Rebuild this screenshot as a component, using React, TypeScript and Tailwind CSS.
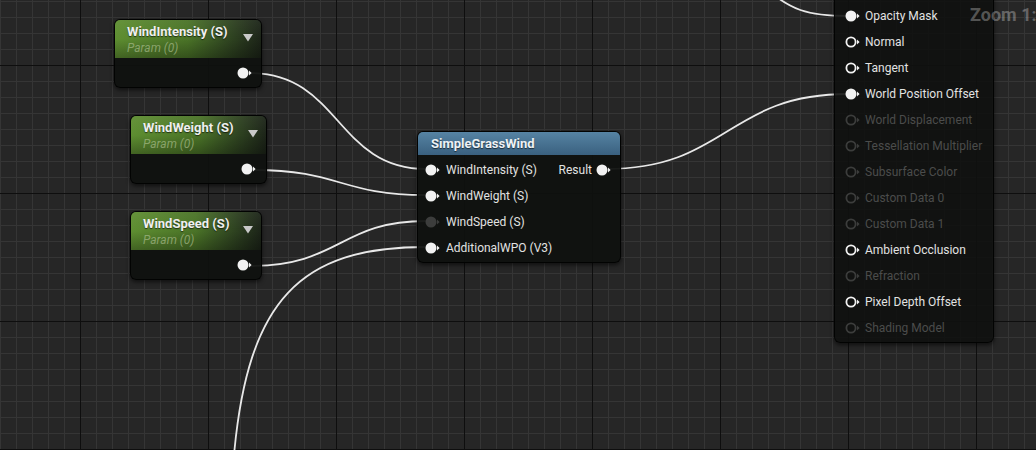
import React from "react";

type PinKind = "filled" | "hollow" | "dim" | "darkfill";

function Pin({ kind }: { kind: PinKind }) {
  const light = "#f2f2f2";
  const dim = "#3c3d3c";
  const col = kind === "dim" || kind === "darkfill" ? dim : light;
  return (
    <svg width="16" height="12" viewBox="0 0 16 12" className="shrink-0">
      {kind === "filled" || kind === "darkfill" ? (
        <circle cx="6" cy="6" r="5.5" fill={col} />
      ) : (
        <circle cx="6" cy="6" r="4.6" fill="none" stroke={col} strokeWidth="1.8" />
      )}
      <polygon points="12,3.5 14.6,6 12,8.5" fill={col} />
    </svg>
  );
}

function ParamNode({
  left,
  top,
  width,
  title,
  pr,
}: {
  left: number;
  top: number;
  width: number;
  title: string;
  pr: number;
}) {
  return (
    <div
      className="absolute rounded-[6px] border border-black/80 bg-[#0f110f]/95 shadow-[0_2px_4px_rgba(0,0,0,0.6)] overflow-hidden"
      style={{ left, top, width }}
    >
      <div className="relative h-[38px] bg-gradient-to-r from-[#5e8e31] via-[#4a7327] to-[#1c2418]">
        <div className="absolute inset-0 bg-gradient-to-b from-white/5 via-transparent to-black/30" />
        <div className="relative flex items-start justify-between pl-[12px] pr-[8px] pt-[4px]">
          <div className="flex flex-col leading-none">
            <span className="text-[13px] font-bold text-[#efefef] leading-[15px] [text-shadow:0_1px_1px_rgba(0,0,0,0.6)]">
              {title}
            </span>
            <span className="mt-[2px] text-[12px] italic text-[#a7bb8a]/70 leading-[15px]">
              Param (0)
            </span>
          </div>
          <svg width="10" height="8" viewBox="0 0 10 8" className="mt-[10px]">
            <polygon points="0,0 10,0 5,7.5" fill="#c9c9c9" />
          </svg>
        </div>
      </div>
      <div className="flex h-[29px] items-center justify-end" style={{ paddingRight: pr }}>
        <Pin kind="filled" />
      </div>
    </div>
  );
}

function Row({
  label,
  kind,
  disabled,
  pad,
}: {
  label: string;
  kind: PinKind;
  disabled?: boolean;
  pad: "fn" | "mat";
}) {
  return (
    <div
      className={
        "flex h-[26px] items-center " +
        (pad === "fn" ? "gap-[5px] pl-[7px]" : "gap-[4px] pl-[10px]")
      }
    >
      <Pin kind={kind} />
      <span
        className={
          "text-[12px] leading-none " +
          (disabled ? "text-[#4b4c4b]" : "text-[#e2e2e2]")
        }
      >
        {label}
      </span>
    </div>
  );
}

export default function App() {
  const W = 1036;
  const H = 450;
  const minorV: number[] = [];
  for (let x = 0; x <= W; x += 16) minorV.push(x);
  const minorH: number[] = [];
  for (let y = 1; y <= H; y += 16) minorH.push(y);
  const majorV = [80, 208, 336, 464, 592, 720, 848, 976];
  const majorH = [65, 193, 321, 449];

  const wire = "#e8e8e8";

  return (
    <div
      className="relative h-[450px] w-[1036px] overflow-hidden bg-[#262626]"
      style={{ fontFamily: "Roboto, 'Liberation Sans', sans-serif" }}
    >
      <svg className="absolute inset-0" width={W} height={H}>
        {minorV.map((x) => (
          <rect key={"v" + x} x={x} y={0} width={1} height={H} fill="#353535" />
        ))}
        {minorH.map((y) => (
          <rect key={"h" + y} x={0} y={y} width={W} height={1} fill="#353535" />
        ))}
        {majorV.map((x) => (
          <rect key={"V" + x} x={x} y={0} width={1} height={H} fill="#0e0e0e" />
        ))}
        {majorH.map((y) => (
          <rect key={"H" + y} x={0} y={y} width={W} height={1} fill="#0e0e0e" />
        ))}
        <g fill="none" stroke={wire} strokeWidth="1.8" strokeLinecap="round">
          <path d="M 250 73 C 340 73, 336 169, 426 169" />
          <path d="M 254 170 C 340 170, 340 195, 426 195" />
          <path d="M 250 266 C 340 266, 340 221, 426 221" />
          <path d="M 426 247 C 300 247, 248 300, 234 455" />
          <path d="M 606 169 C 727 169, 727 94, 848 94" />
          <path d="M 848 16 C 805 16, 790 8, 770 -8" />
        </g>
      </svg>

      <ParamNode left={114} top={19} width={148} title="WindIntensity (S)" pr={8} />
      <ParamNode left={130} top={115} width={137} title="WindWeight (S)" pr={9} />
      <ParamNode left={130} top={211} width={132} title="WindSpeed (S)" pr={8} />

      {/* SimpleGrassWind function node */}
      <div className="absolute left-[417px] top-[131px] w-[204px] rounded-[6px] border border-black/80 bg-[#0f110f]/95 shadow-[0_2px_4px_rgba(0,0,0,0.6)] overflow-hidden">
        <div className="relative flex h-[23px] items-center bg-gradient-to-b from-[#5683a3] to-[#3a6180] pl-[13px]">
          <span className="text-[13px] font-bold text-[#eef2f5] [text-shadow:0_1px_1px_rgba(0,0,0,0.6)]">
            SimpleGrassWind
          </span>
        </div>
        <div className="flex justify-between pt-[2px] pb-[1px]">
          <div className="flex flex-col">
            <Row pad="fn" label="WindIntensity (S)" kind="filled" />
            <Row pad="fn" label="WindWeight (S)" kind="filled" />
            <Row pad="fn" label="WindSpeed (S)" kind="darkfill" />
            <Row pad="fn" label="AdditionalWPO (V3)" kind="filled" />
          </div>
          <div className="flex h-[26px] items-center gap-[4px] pr-[8px]">
            <span className="text-[12px] leading-none text-[#e2e2e2]">Result</span>
            <Pin kind="filled" />
          </div>
        </div>
      </div>

      {/* Material result node */}
      <div className="absolute left-[834px] top-[-41px] w-[160px] rounded-[6px] border border-black/80 bg-[#0f110f]/90 shadow-[0_2px_4px_rgba(0,0,0,0.6)] overflow-hidden">
        <div className="h-[43px]" />
        <div className="flex flex-col pb-[1px]">
          <Row pad="mat" label="Opacity Mask" kind="filled" />
          <Row pad="mat" label="Normal" kind="hollow" />
          <Row pad="mat" label="Tangent" kind="hollow" />
          <Row pad="mat" label="World Position Offset" kind="filled" />
          <Row pad="mat" label="World Displacement" kind="dim" disabled />
          <Row pad="mat" label="Tessellation Multiplier" kind="dim" disabled />
          <Row pad="mat" label="Subsurface Color" kind="dim" disabled />
          <Row pad="mat" label="Custom Data 0" kind="dim" disabled />
          <Row pad="mat" label="Custom Data 1" kind="dim" disabled />
          <Row pad="mat" label="Ambient Occlusion" kind="hollow" />
          <Row pad="mat" label="Refraction" kind="dim" disabled />
          <Row pad="mat" label="Pixel Depth Offset" kind="hollow" />
          <Row pad="mat" label="Shading Model" kind="dim" disabled />
        </div>
      </div>

      <div className="absolute left-[970px] top-[1px] whitespace-nowrap text-[18px] font-bold text-white/30">
        Zoom 1:1
      </div>
    </div>
  );
}
